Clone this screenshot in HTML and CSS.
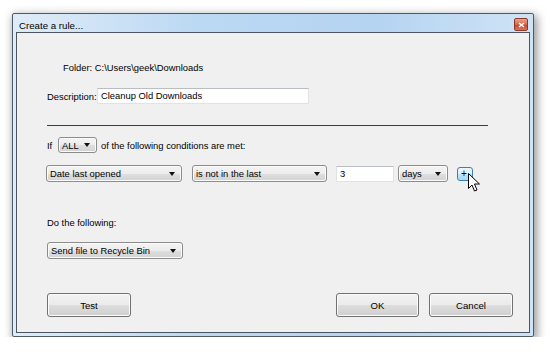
FILE: index.html
```html
<!DOCTYPE html>
<html lang="en">
<head>
    <meta charset="UTF-8">
    <meta name="viewport" content="width=device-width, initial-scale=1.0">
    <title>Create a rule</title>
    <link rel="stylesheet" href="styles.css">
</head>
<body>

    <div class="window">
        <!-- Title bar -->
        <div class="titlebar">
            <span class="title">Create a rule...</span>
            <span class="close"><svg width="7" height="6" viewBox="0 0 7 6"><path d="M1 1 L6 5 M6 1 L1 5" stroke="#fff" stroke-width="1.6"/></svg></span>
        </div>

        <div class="client">
            <div class="folder">Folder: C:\Users\geek\Downloads</div>

            <div class="row desc-row">
                <span class="desc-label">Description:</span>
                <div class="textbox desc-box">Cleanup Old Downloads</div>
            </div>

            <div class="divider"></div>

            <div class="row if-row">
                <span class="if-label">If</span>
                <div class="combo combo-all"><span>ALL</span><i class="arrow"></i></div>
                <span>of the following conditions are met:</span>
            </div>

            <!-- Condition -->
            <div class="row cond-row">
                <div class="combo combo-field"><span>Date last opened</span><i class="arrow"></i></div>
                <div class="combo combo-op"><span>is not in the last</span><i class="arrow"></i></div>
                <div class="textbox num-box">3</div>
                <div class="combo combo-unit"><span>days</span><i class="arrow"></i></div>
                <div class="plus">
                    <span class="plus-sign">+</span>
                    <svg class="cursor" width="13" height="20" viewBox="0 0 13 20"><path d="M0.5 0.5 L0.5 15.5 L4 12 L6.5 18 L9 17 L6.5 11 L11.5 11 Z" fill="#fff" stroke="#000" stroke-width="1" stroke-linejoin="round"/></svg>
                </div>
            </div>

            <div class="action-label">Do the following:</div>

            <div class="row">
                <div class="combo combo-action"><span>Send file to Recycle Bin</span><i class="arrow"></i></div>
            </div>

            <div class="row buttons">
                <button class="btn">Test</button>
                <div class="spacer"></div>
                <button class="btn btn-ok">OK</button>
                <button class="btn">Cancel</button>
            </div>
        </div>
    </div>

</body>
</html>
```

FILE: styles.css
```css
* {
    box-sizing: border-box;
}
body {
    background-color: #fff;
    font-family: "Liberation Sans", Arial, sans-serif;
    font-size: 9.4px;
    color: #000;
    margin: 0;
    padding: 13px 0 0 12px;
}
.window {
    width: 522px;
    height: 324px;
    border: 1px solid #4d5a66;
    border-radius: 2px;
    padding: 0 3px 3px 3px;
    background: linear-gradient(to right, #dfecf8, #bcd9f3 35%, #b5d4f1 70%, #cfe3f6);
    box-shadow: 2px 3px 10px 1px rgba(0, 0, 0, 0.42);
    display: flex;
    flex-direction: column;
}
.titlebar {
    height: 18px;
    flex-shrink: 0;
    display: flex;
    justify-content: space-between;
    align-items: flex-start;
}
.title {
    font-size: 9.7px;
    color: #000;
    margin: 6px 0 0 3px;
}
.close {
    width: 14px;
    height: 13px;
    margin: 4px 2px 0 0;
    border: 1px solid #8a3a2a;
    border-radius: 2px;
    background: linear-gradient(#eea08e, #d9664b 50%, #c7401f 51%, #d9775c);
    display: flex;
    align-items: center;
    justify-content: center;
}
.client {
    flex: 1;
    border: 1px solid #4b5560;
    background-color: #f0f0f0;
    padding: 0 16px 0 29px;
    display: flex;
    flex-direction: column;
}
.row {
    display: flex;
    align-items: center;
}
.folder {
    margin: 28px 0 0 17px;
    line-height: 14px;
}
.desc-row {
    margin: 13px 0 0 1px;
}
.desc-label {
    width: 50px;
}
.textbox {
    height: 16px;
    line-height: 14px;
    background-color: #fff;
    border: 1px solid #dfe3e8;
    border-top-color: #b9bec4;
    padding-left: 3px;
}
.desc-box {
    width: 212px;
}
.divider {
    width: 441px;
    margin: 21px 0 0 1px;
    border-top: 1px solid #3c3c3c;
}
.if-row {
    margin: 11px 0 0 1px;
    height: 16px;
}
.if-label {
    width: 11px;
}
.combo {
    height: 17px;
    border: 1px solid #8c8c8c;
    border-radius: 3px;
    background: linear-gradient(#f4f4f4, #ececec 50%, #dfdfdf 51%, #d2d2d2);
    box-shadow: inset 0 0 0 1px #fbfbfb;
    display: flex;
    align-items: center;
    justify-content: space-between;
    padding: 0 6px 0 3px;
}
.arrow {
    width: 0;
    height: 0;
    border-left: 3.5px solid transparent;
    border-right: 3.5px solid transparent;
    border-top: 4px solid #111;
}
.combo-all {
    width: 39px;
    height: 16px;
    margin-right: 4px;
}
.cond-row {
    margin-top: 12px;
    height: 17px;
}
.combo-field {
    width: 136px;
    margin-right: 10px;
}
.combo-op {
    width: 135px;
    margin-right: 9px;
}
.num-box {
    width: 58px;
    margin-right: 4px;
}
.combo-unit {
    width: 50px;
    margin-right: 9px;
}
.plus {
    position: relative;
    width: 16px;
    height: 14px;
    border: 1px solid #3c7fb1;
    border-radius: 3px;
    background: linear-gradient(#eaf6fd, #d9f0fc 50%, #bee6fd 51%, #a7d9f5);
    font-size: 10px;
    line-height: 11px;
    color: #000;
}
.plus-sign {
    margin-left: 3px;
}
.cursor {
    position: absolute;
    left: 10px;
    top: 5px;
}
.action-label {
    margin: 34px 0 0 1px;
    line-height: 14px;
}
.combo-action {
    width: 136px;
    margin: 12px 0 0 1px;
}
.buttons {
    margin: 34px 0 0 1px;
    gap: 10px;
}
.spacer {
    flex: 1;
}
.btn {
    width: 84px;
    height: 24px;
    font-family: inherit;
    font-size: 9.6px;
    color: #000;
    border: 1px solid #707070;
    border-radius: 3px;
    background: linear-gradient(#f2f2f2, #ebebeb 50%, #dddddd 51%, #cfcfcf);
    box-shadow: inset 0 0 0 1px #fcfcfc;
    padding: 0;
}
.btn-ok {
    width: 83px;
}
```
